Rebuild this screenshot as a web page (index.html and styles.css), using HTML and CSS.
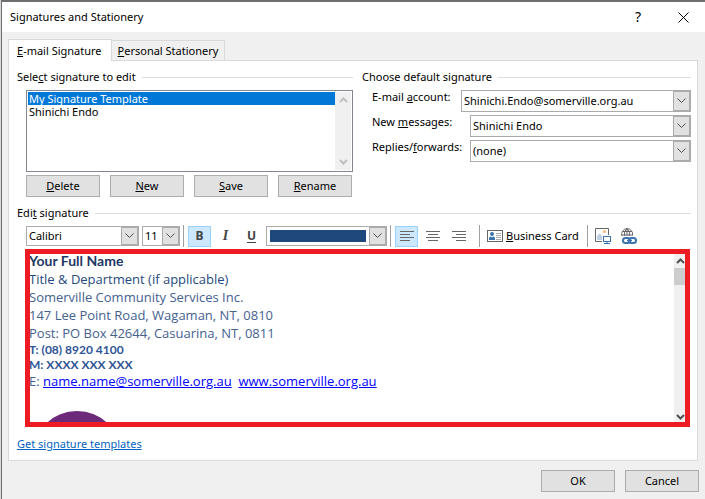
FILE: index.html
```html
<!DOCTYPE html>
<html lang="en">
<head>
    <meta charset="UTF-8">
    <meta name="viewport" content="width=device-width, initial-scale=1.0">
    <title>Signatures and Stationery</title>
    <link rel="stylesheet" href="styles.css">
</head>
<body>
    <div class="dialog">
        <header class="titlebar">
            <h1>Signatures and Stationery</h1>
            <button class="title-button help" aria-label="Help">?</button>
            <button class="title-button" aria-label="Close">
                <svg width="11" height="11" viewBox="0 0 11 11"><path d="M.5.5l10 10M10.5.5l-10 10" stroke="#000" fill="none"/></svg>
            </button>
        </header>

        <div class="tabs" role="tablist">
            <button class="tab active" role="tab" aria-selected="true"><u>E</u>-mail Signature</button>
            <button class="tab" role="tab" aria-selected="false"><u>P</u>ersonal Stationery</button>
        </div>

        <main class="panel">
            <div class="top">
                <section>
                    <div class="group-title"><label for="signatures">Sele<u>c</u>t signature to edit</label></div>
                    <div class="listbox">
                        <select id="signatures" size="2">
                            <option selected>My Signature Template</option>
                            <option>Shinichi Endo</option>
                        </select>
                        <div class="scrollbar disabled">
                            <svg width="9" height="6" viewBox="0 0 9 6"><path d="M1 5l3.500-3.500L8 5"/></svg>
                            <svg width="9" height="6" viewBox="0 0 9 6"><path d="M1 1l3.500 3.500L8 1"/></svg>
                        </div>
                    </div>
                    <div class="list-buttons">
                        <button class="button"><u>D</u>elete</button>
                        <button class="button"><u>N</u>ew</button>
                        <button class="button"><u>S</u>ave</button>
                        <button class="button"><u>R</u>ename</button>
                    </div>
                </section>

                <section>
                    <div class="group-title"><h2>Choose default signature</h2></div>
                    <div class="defaults">
                        <div class="field">
                            <label class="short" for="account">E-mail <u>a</u>ccount:</label>
                            <div class="combo">
                                <select id="account"><option>Shinichi.Endo@somerville.org.au</option></select>
                                <span class="arrow"><svg width="9" height="6" viewBox="0 0 9 6"><path d="M.5.500l4 4 4-4"/></svg></span>
                            </div>
                        </div>
                        <div class="field">
                            <label for="messages">New <u>m</u>essages:</label>
                            <div class="combo">
                                <select id="messages"><option>Shinichi Endo</option></select>
                                <span class="arrow"><svg width="9" height="6" viewBox="0 0 9 6"><path d="M.5.500l4 4 4-4"/></svg></span>
                            </div>
                        </div>
                        <div class="field">
                            <label for="replies">Replies/<u>f</u>orwards:</label>
                            <div class="combo">
                                <select id="replies"><option>(none)</option></select>
                                <span class="arrow"><svg width="9" height="6" viewBox="0 0 9 6"><path d="M.5.500l4 4 4-4"/></svg></span>
                            </div>
                        </div>
                    </div>
                </section>
            </div>

            <div class="group-title edit-title"><h2>Edi<u>t</u> signature</h2></div>

            <div class="toolbar">
                <div class="combo font-name">
                    <select aria-label="Font"><option>Calibri</option></select>
                    <span class="arrow"><svg width="9" height="6" viewBox="0 0 9 6"><path d="M.5.500l4 4 4-4"/></svg></span>
                </div>
                <div class="combo font-size">
                    <select aria-label="Font size"><option>11</option></select>
                    <span class="arrow"><svg width="9" height="6" viewBox="0 0 9 6"><path d="M.5.500l4 4 4-4"/></svg></span>
                </div>
                <span class="separator"></span>
                <div class="styles">
                    <button class="tool bold pressed" aria-label="Bold">B</button>
                    <button class="tool italic" aria-label="Italic">I</button>
                    <button class="tool underline" aria-label="Underline">U</button>
                </div>
                <button class="combo color" aria-label="Font color">
                    <span class="swatch"></span>
                    <span class="arrow"><svg width="9" height="6" viewBox="0 0 9 6"><path d="M.5.500l4 4 4-4"/></svg></span>
                </button>
                <span class="separator"></span>
                <div class="aligns">
                    <button class="tool pressed" aria-label="Align left">
                        <svg width="14" height="11" viewBox="0 0 14 11"><path d="M0 .5h14M0 3.500h10M0 6.500h14M0 9.500h10" stroke="#666"/></svg>
                    </button>
                    <button class="tool" aria-label="Center">
                        <svg width="14" height="11" viewBox="0 0 14 11"><path d="M0 .5h14M2 3.500h10M0 6.500h14M2 9.500h10" stroke="#666"/></svg>
                    </button>
                    <button class="tool" aria-label="Align right">
                        <svg width="14" height="11" viewBox="0 0 14 11"><path d="M0 .5h14M4 3.500h10M0 6.500h14M4 9.500h10" stroke="#666"/></svg>
                    </button>
                </div>
                <span class="separator"></span>
                <button class="tool card">
                    <svg width="16" height="12" viewBox="0 0 16 12">
                        <rect x=".5" y=".5" width="15" height="11" fill="#fff" stroke="#666"/>
                        <circle cx="5" cy="4" r="2" fill="#3b73af"/>
                        <path d="M2 10V8.500Q2 6.500 4 6.500l1 1 1-1q2 0 2 2V10z" fill="#3b73af"/>
                        <path d="M9 3.500h5M9 5.500h5M9 7.500h5M9 9.500h5" stroke="#aaa"/>
                    </svg>
                    <span><u>B</u>usiness Card</span>
                </button>
                <span class="separator"></span>
                <div class="inserts">
                    <button class="tool" aria-label="Picture">
                        <svg width="16" height="16" viewBox="0 0 16 16">
                            <path d="M7 13.500H.5V.5h13V7" fill="none" stroke="#666"/>
                            <circle cx="9.500" cy="3.500" r="1.500" fill="#f3b878"/>
                            <path d="M2 12V8l2.500-2.500L7 8v4z" fill="#bfd0e2"/>
                            <rect x="8.500" y="8.500" width="7" height="5" fill="#fff" stroke="#3b73af"/>
                            <path d="M12 13v2M9 15.500h6" stroke="#3b73af"/>
                        </svg>
                    </button>
                    <button class="tool" aria-label="Hyperlink">
                        <svg width="16" height="16" viewBox="0 0 16 16" fill="none">
                            <path d="M1 8A5.500 5.500 0 1 1 11.500 7.500M1 3.500h10M.5 7h11M3.500 8Q2.500 3.500 6 .5Q9.500 3.500 8.500 8M6 .5V8" stroke="#666"/>
                            <rect x="2" y="10" width="7" height="5" rx="2.500" stroke="#3b73af" stroke-width="2"/>
                            <rect x="8" y="10" width="7" height="5" rx="2.500" stroke="#3b73af" stroke-width="2"/>
                            <path d="M6 12.500h5" stroke="#3b73af" stroke-width="1.500"/>
                        </svg>
                    </button>
                </div>
            </div>

            <div class="editor">
                <div class="signature" contenteditable="true" role="textbox" aria-label="Edit signature" spellcheck="false">
                    <p class="name">Your Full Name</p>
                    <p class="job">Title &amp; Department (if applicable)</p>
                    <p>Somerville Community Services Inc.</p>
                    <p>147 Lee Point Road, Wagaman, NT, 0810</p>
                    <p>Post: PO Box 42644, Casuarina, NT, 0811</p>
                    <p class="phone">T: (08) 8920 4100</p>
                    <p class="phone">M: XXXX XXX XXX</p>
                    <p>E: <a href="mailto:name.name@somerville.org.au">name.name@somerville.org.au</a>&nbsp; <a href="#">www.somerville.org.au</a></p>
                    <div class="logo"></div>
                </div>
                <div class="scrollbar">
                    <svg width="9" height="6" viewBox="0 0 9 6"><path d="M1 5l3.500-3.500L8 5"/></svg>
                    <span class="thumb"></span>
                    <svg width="9" height="6" viewBox="0 0 9 6"><path d="M1 1l3.500 3.500L8 1"/></svg>
                </div>
            </div>

            <a class="templates" href="#">Get signature templates</a>
        </main>

        <footer class="actions">
            <button class="button">OK</button>
            <button class="button">Cancel</button>
        </footer>
    </div>
</body>
</html>
```

FILE: styles.css
```css
* {
    box-sizing: border-box;
}
body {
    margin: 0;
    font-family: "Noto Sans", "Open Sans", sans-serif;
    font-size: 11px;
    line-height: 14px;
    color: #000;
    background-color: #d8d8d8;
}
h1, h2, p {
    margin: 0;
    font-size: inherit;
    font-weight: normal;
}
button, select {
    font: inherit;
    color: inherit;
    padding: 0;
}
.dialog {
    display: flex;
    flex-direction: column;
    height: 100vh;
    min-height: 499px;
    padding: 0 7px 7px 6px;
    margin-left: 1px;
    border-top: 2px solid #6e6e6e;
    border-left: 1px solid #6e6e6e;
    background-color: #f0f0f0;
}
.titlebar {
    display: flex;
    align-items: center;
    height: 30px;
    margin: 0 -7px 0 -6px;
    padding: 0 2px 0 8px;
    background-color: #fff;
}
.titlebar h1 {
    flex: 1;
}
.title-button {
    display: flex;
    align-items: center;
    justify-content: center;
    width: 40px;
    height: 30px;
    border: none;
    background: none;
}
.help {
    margin-right: 5px;
    font-size: 14px;
}

/* tabs */
.tabs {
    display: flex;
    align-items: flex-end;
    margin-top: 7px;
}
.tab {
    height: 20px;
    padding: 0 6px;
    border: 1px solid #d9d9d9;
    border-width: 1px 1px 0 0;
    background-color: #f0f0f0;
}
.tab.active {
    height: 22px;
    padding: 0 9px 0 8px;
    border-left-width: 1px;
    margin-bottom: -1px;
    background-color: #fff;
    z-index: 1;
}
.panel {
    display: flex;
    flex-direction: column;
    flex: 1;
    min-height: 0;
    padding: 9px 6px 9px 8px;
    border: 1px solid #d9d9d9;
    background-color: #fff;
}
.top {
    display: grid;
    grid-template-columns: 336fr 329fr;
    gap: 9px;
}
.group-title {
    display: flex;
    align-items: center;
    gap: 6px;
}
.group-title::after {
    content: "";
    flex: 1;
    height: 1px;
    background-color: #dcdcdc;
}

/* signature list */
.listbox {
    display: flex;
    height: 82px;
    margin: 6px 0 3px 9px;
    padding: 1px;
    border: 1px solid #828790;
}
.listbox select {
    flex: 1;
    min-width: 0;
    border: none;
    border-radius: 0;
    outline: none;
    overflow: hidden;
    background-color: #fff;
}
.listbox option {
    display: flex;
    align-items: center;
    height: 13px;
    min-height: 13px;
    padding: 0 1px;
    line-height: 13px;
    color: #000;
}
.listbox option:checked {
    color: #fff;
    background: linear-gradient(#0078d7, #0078d7);
}
.scrollbar {
    display: flex;
    flex-direction: column;
    justify-content: space-between;
    align-items: center;
    width: 16px;
    padding: 5px 0;
    background-color: #f0f0f0;
}
.scrollbar path {
    fill: none;
    stroke: #505050;
    stroke-width: 2;
}
.scrollbar.disabled path {
    stroke: #bfbfbf;
}
.list-buttons {
    display: grid;
    grid-template-columns: repeat(4, 1fr);
    gap: 10px;
    margin: 0 1px 0 9px;
}
.button {
    height: 22px;
    border: 1px solid #adadad;
    background-color: #e1e1e1;
}

/* default signature */
.defaults {
    display: flex;
    flex-direction: column;
    gap: 3px;
    margin: 6px 0 0 10px;
}
.field {
    display: flex;
}
.field label {
    width: 98px;
}
.field .short {
    width: 89px;
}
.field .combo {
    flex: 1;
}
.combo {
    display: flex;
    position: relative;
    height: 22px;
    min-width: 0;
    padding: 0;
    border: 1px solid #ababab;
    background-color: #fff;
}
.combo select {
    flex: 1;
    min-width: 0;
    padding: 0 17px 0 2px;
    border: none;
    appearance: none;
    background: none;
}
.arrow {
    position: absolute;
    top: 0;
    right: 0;
    display: flex;
    align-items: center;
    justify-content: center;
    width: 17px;
    height: 100%;
    border: 1px solid #ababab;
    background-color: #e1e1e1;
    pointer-events: none;
}
.arrow path {
    fill: none;
    stroke: #505050;
}

/* toolbar */
.edit-title {
    margin-top: 9px;
}
.toolbar {
    display: flex;
    align-items: center;
    height: 22px;
    margin: 5px 0 2px 9px;
}
.toolbar .combo {
    height: 20px;
}
.toolbar .font-name {
    width: 113px;
    margin-right: 3px;
}
.toolbar .font-size {
    width: 38px;
}
.separator {
    width: 1px;
    height: 22px;
    margin: 0 4px 0 3px;
    background-color: #a0a0a0;
}
.tool {
    display: flex;
    align-items: center;
    justify-content: center;
    width: 23px;
    height: 21px;
    border: 1px solid transparent;
    background: none;
}
.tool.pressed {
    border-color: #99d1ff;
    background-color: #cce8ff;
}
.styles, .aligns, .inserts {
    display: flex;
    gap: 3px;
}
.aligns {
    margin-right: 6px;
}
.bold, .italic, .underline {
    font-size: 12px;
    font-weight: bold;
    color: #444;
}
.italic {
    font-family: "Liberation Serif", serif;
    font-size: 14px;
    font-style: italic;
}
.underline {
    text-decoration: underline;
    text-underline-offset: 2px;
}
.color {
    width: 121px;
    margin: 0 0 0 3px;
}
.swatch {
    flex: 1;
    margin: 3px 20px 3px 3px;
    background-color: #1f497d;
}
.card {
    width: auto;
    gap: 3px;
    margin-right: 4px;
    padding: 0 0 0 2px;
}

/* editor */
.editor {
    display: flex;
    flex: 1;
    min-height: 0;
    margin: 0 1px 0 8px;
    border: 5px solid #ed1c24;
    overflow: hidden;
}
.signature {
    flex: 1;
    margin: -2px 0 0 -1px;
    outline: none;
    font-family: "Open Sans", "Noto Sans", sans-serif;
    font-size: 13px;
    line-height: 18px;
    color: #44618f;
}
.signature a {
    color: #0000ff;
}
.name {
    font-family: Lato, sans-serif;
    font-size: 14px;
    font-weight: bold;
    color: #1f3864;
}
.job {
    color: #1f497d;
}
.phone {
    font-family: Lato, sans-serif;
    font-size: 12px;
    line-height: 15px;
    font-weight: bold;
    color: #2f5496;
}
.logo {
    width: 88px;
    height: 88px;
    margin: 21px 0 0 4px;
    border-radius: 50%;
    background-color: #6d2a7b;
}
.editor .scrollbar {
    justify-content: flex-start;
    width: 11px;
    padding: 4px 0 2px 2px;
}
.editor .scrollbar svg {
    flex: none;
}
.thumb {
    width: 11px;
    height: 17px;
    margin: 4px 0 auto -2px;
    background-color: #cdcdcd;
}
.templates {
    align-self: flex-start;
    margin-top: 10px;
    color: #0563c1;
}
.actions {
    display: flex;
    justify-content: flex-end;
    gap: 10px;
    margin: 9px -1px 0 0;
}
.actions .button {
    width: 74px;
}
```
